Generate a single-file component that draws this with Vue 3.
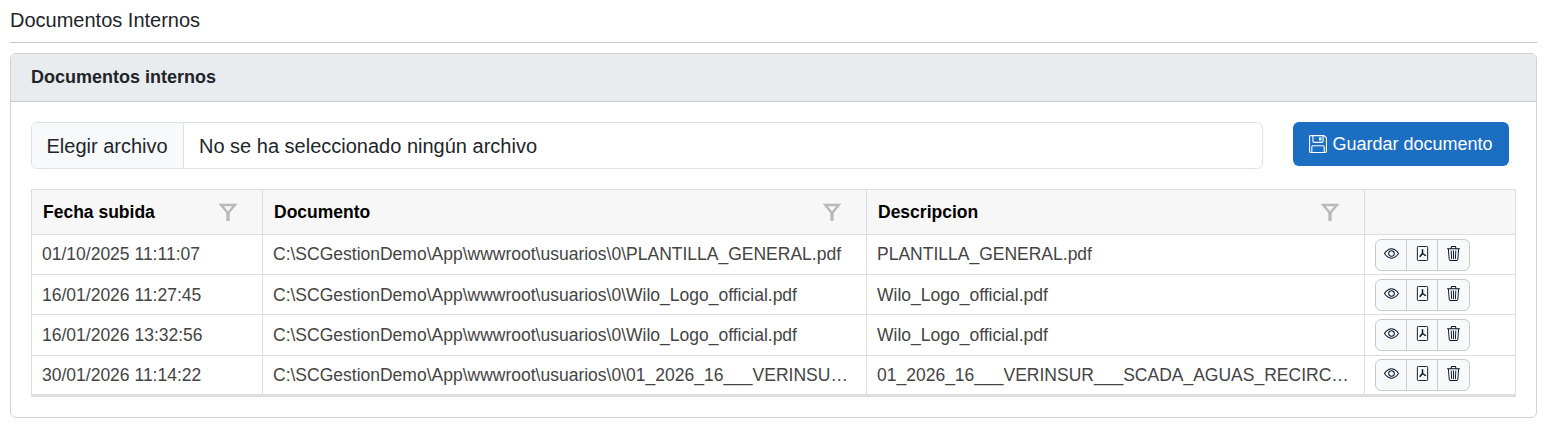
<script setup>
const rows = [
  ['01/10/2025 11:11:07', 'C:\\SCGestionDemo\\App\\wwwroot\\usuarios\\0\\PLANTILLA_GENERAL.pdf', 'PLANTILLA_GENERAL.pdf'],
  ['16/01/2026 11:27:45', 'C:\\SCGestionDemo\\App\\wwwroot\\usuarios\\0\\Wilo_Logo_official.pdf', 'Wilo_Logo_official.pdf'],
  ['16/01/2026 13:32:56', 'C:\\SCGestionDemo\\App\\wwwroot\\usuarios\\0\\Wilo_Logo_official.pdf', 'Wilo_Logo_official.pdf'],
  ['30/01/2026 11:14:22', 'C:\\SCGestionDemo\\App\\wwwroot\\usuarios\\0\\01_2026_16___VERINSUR___SCADA_AGUAS_RECIRCULADAS.pdf', '01_2026_16___VERINSUR___SCADA_AGUAS_RECIRCULADAS.pdf'],
]
const headers = ['Fecha subida', 'Documento', 'Descripcion']
</script>

<template>
  <div class="page">
    <div class="title">Documentos Internos</div>
    <hr class="rule" />
    <section class="card">
      <header class="card-head">Documentos internos</header>
      <div class="card-body">
        <div class="upload">
          <div class="file">
            <span class="file-btn">Elegir archivo</span>
            <span class="file-name">No se ha seleccionado ningún archivo</span>
          </div>
          <button class="save">
            <svg class="save-icon" viewBox="0 0 16 16" fill="currentColor"><path d="M11 2H9v3h2z"/><path d="M1.5 0h11.586a1.5 1.5 0 0 1 1.06.44l1.415 1.414A1.5 1.5 0 0 1 16 2.914V14.5a1.5 1.5 0 0 1-1.5 1.5h-13A1.5 1.5 0 0 1 0 14.5v-13A1.5 1.5 0 0 1 1.5 0M1 1.5v13a.5.5 0 0 0 .5.5H2v-4.5A1.5 1.5 0 0 1 3.5 9h9a1.5 1.5 0 0 1 1.5 1.5V15h.5a.5.5 0 0 0 .5-.5V2.914a.5.5 0 0 0-.146-.353l-1.415-1.415A.5.5 0 0 0 13.086 1H13v4.5A1.5 1.5 0 0 1 11.5 7h-7A1.5 1.5 0 0 1 3 5.5V1H1.5a.5.5 0 0 0-.5.5m3 4a.5.5 0 0 0 .5.5h7a.5.5 0 0 0 .5-.5V1H4zM3 15h10v-4.5a.5.5 0 0 0-.5-.5h-9a.5.5 0 0 0-.5.5z"/></svg>
            <span>Guardar documento</span>
          </button>
        </div>
        <table class="grid">
          <colgroup>
            <col class="c1" /><col class="c2" /><col class="c3" /><col class="c4" />
          </colgroup>
          <thead>
            <tr>
              <th v-for="h in headers" :key="h">
                <div class="th-in">
                  <span>{{ h }}</span>
                  <svg class="funnel" viewBox="0 0 18 18" fill="none" stroke="currentColor"><path d="M2.2 2h13.6L9 10.2z" stroke-width="2.4"/><path d="M9 9v9" stroke-width="3.4"/></svg>
                </div>
              </th>
              <th></th>
            </tr>
          </thead>
          <tbody>
            <tr v-for="(r, i) in rows" :key="i">
              <td v-for="(c, j) in r" :key="j" class="text"><div class="clip">{{ c }}</div></td>
              <td class="act">
                <div class="group">
                  <button class="ib">
                    <svg viewBox="0 0 16 16" fill="currentColor"><path d="M16 8s-3-5.5-8-5.5S0 8 0 8s3 5.5 8 5.5S16 8 16 8M1.173 8a13 13 0 0 1 1.66-2.043C4.12 4.668 5.88 3.5 8 3.5s3.879 1.168 5.168 2.457A13 13 0 0 1 14.828 8q-.086.13-.195.288c-.335.48-.83 1.12-1.465 1.755C11.879 11.332 10.119 12.5 8 12.5s-3.879-1.168-5.168-2.457A13 13 0 0 1 1.172 8z"/><path d="M8 5.5a2.5 2.5 0 1 0 0 5 2.5 2.5 0 0 0 0-5M4.5 8a3.5 3.5 0 1 1 7 0 3.5 3.5 0 0 1-7 0"/></svg>
                  </button>
                  <button class="ib">
                    <svg viewBox="0 0 16 16" fill="none" stroke="currentColor"><rect x="2.5" y="0.5" width="11" height="15" rx="1"/><path d="M8 3.5v4.5M8 8l-3 3.5M8 8l3.6 2.4" stroke-width="1.6"/></svg>
                  </button>
                  <button class="ib">
                    <svg viewBox="0 0 16 16" fill="currentColor"><path d="M6.5 1h3a.5.5 0 0 1 .5.5v1H6v-1a.5.5 0 0 1 .5-.5M11 2.5v-1A1.5 1.5 0 0 0 9.5 0h-3A1.5 1.5 0 0 0 5 1.5v1H1.5a.5.5 0 0 0 0 1h.538l.853 10.66A2 2 0 0 0 4.885 16h6.23a2 2 0 0 0 1.994-1.84l.853-10.66h.538a.5.5 0 0 0 0-1zm1.958 1-.846 10.58a1 1 0 0 1-.997.92h-6.23a1 1 0 0 1-.997-.92L3.042 3.5zm-7.487 1a.5.5 0 0 1 .528.47l.5 8.5a.5.5 0 0 1-.998.06L5 5.03a.5.5 0 0 1 .47-.53Zm5.058 0a.5.5 0 0 1 .47.53l-.5 8.5a.5.5 0 1 1-.998-.06l.5-8.5a.5.5 0 0 1 .528-.47M8 4.5a.5.5 0 0 1 .5.5v8.5a.5.5 0 0 1-1 0V5a.5.5 0 0 1 .5-.5"/></svg>
                  </button>
                </div>
              </td>
            </tr>
          </tbody>
        </table>
      </div>
    </section>
  </div>
</template>

<style>
html, body { margin: 0; background: #fff; }
</style>

<style scoped>
.page {
  width: 1547px;
  height: 434px;
  box-sizing: border-box;
  padding: 10px 10px 0;
  font-family: "Liberation Sans", Arial, sans-serif;
  color: #212529;
  overflow: hidden;
}
.title { font-size: 20px; line-height: 21px; }
.rule { margin: 11px 0 10px; border: 0; border-top: 1px solid #c9c9c9; height: 0; }
.card {
  border: 1px solid #d0d2d4;
  border-radius: 6px;
  height: 365px;
  box-sizing: border-box;
}
.card-head {
  height: 48px;
  box-sizing: border-box;
  background: #e9ecef;
  border-bottom: 1px solid #c8cacc;
  border-radius: 5px 5px 0 0;
  padding: 0 20px;
  font-size: 18px;
  font-weight: 700;
  line-height: 47px;
}
.card-body { padding: 20px 20px 0; }
.upload { display: flex; align-items: flex-start; }
.file {
  width: 1232px;
  height: 47px;
  box-sizing: border-box;
  border: 1px solid #dee2e6;
  border-radius: 6px;
  display: flex;
  align-items: stretch;
  font-size: 20px;
  line-height: 46px;
  overflow: hidden;
}
.file-btn {
  width: 152px;
  box-sizing: border-box;
  padding-left: 14.5px;
  background: #f8f9fa;
  border-right: 1px solid #dee2e6;
}
.file-name { padding-left: 15px; }
.save {
  margin-left: 30px;
  width: 216px;
  height: 44px;
  border: 0;
  border-radius: 6px;
  background: #1b6ec2;
  color: #fff;
  font: 400 18px "Liberation Sans", Arial, sans-serif;
  display: flex;
  align-items: center;
  justify-content: center;
  gap: 5px;
  padding: 0;
}
.save-icon { width: 18px; height: 18px; }
.grid {
  margin-top: 20px;
  width: 1484px;
  table-layout: fixed;
  border-collapse: collapse;
  border-bottom: 3px solid #dedede;
  font-size: 17.5px;
}
.c1 { width: 231px; }
.c2 { width: 604px; }
.c3 { width: 498px; }
.c4 { width: 151px; }
th, td { border: 1px solid #dedede; box-sizing: border-box; }
th {
  height: 45px;
  padding: 0 11px;
  background: #f7f7f7;
  color: #000;
  font-weight: 700;
  text-align: left;
}
.th-in { display: flex; align-items: center; justify-content: space-between; padding-right: 14px; }
.funnel { width: 18px; height: 18px; color: #b9b9b9; flex: none; }
tbody tr { height: 40.2px; }
td { padding: 0 11px 0 10px; color: #444; }
td.text { padding-top: 0.7px; }
.clip { white-space: nowrap; overflow: hidden; text-overflow: ellipsis; }
.act { padding: 0 10px; }
.group {
  display: inline-flex;
  vertical-align: middle;
  height: 32px;
  border: 1px solid #c8cacc;
  border-radius: 6px;
  background: #f8f9fa;
  overflow: hidden;
  box-sizing: border-box;
}
.ib {
  width: 31px;
  height: 30px;
  padding: 0 0 2px;
  border: 0;
  border-right: 1px solid #c8cacc;
  background: transparent;
  color: #02102a;
  display: flex;
  align-items: center;
  justify-content: center;
}
.ib:last-child { border-right: 0; }
.ib svg { width: 15px; height: 15px; }
</style>
